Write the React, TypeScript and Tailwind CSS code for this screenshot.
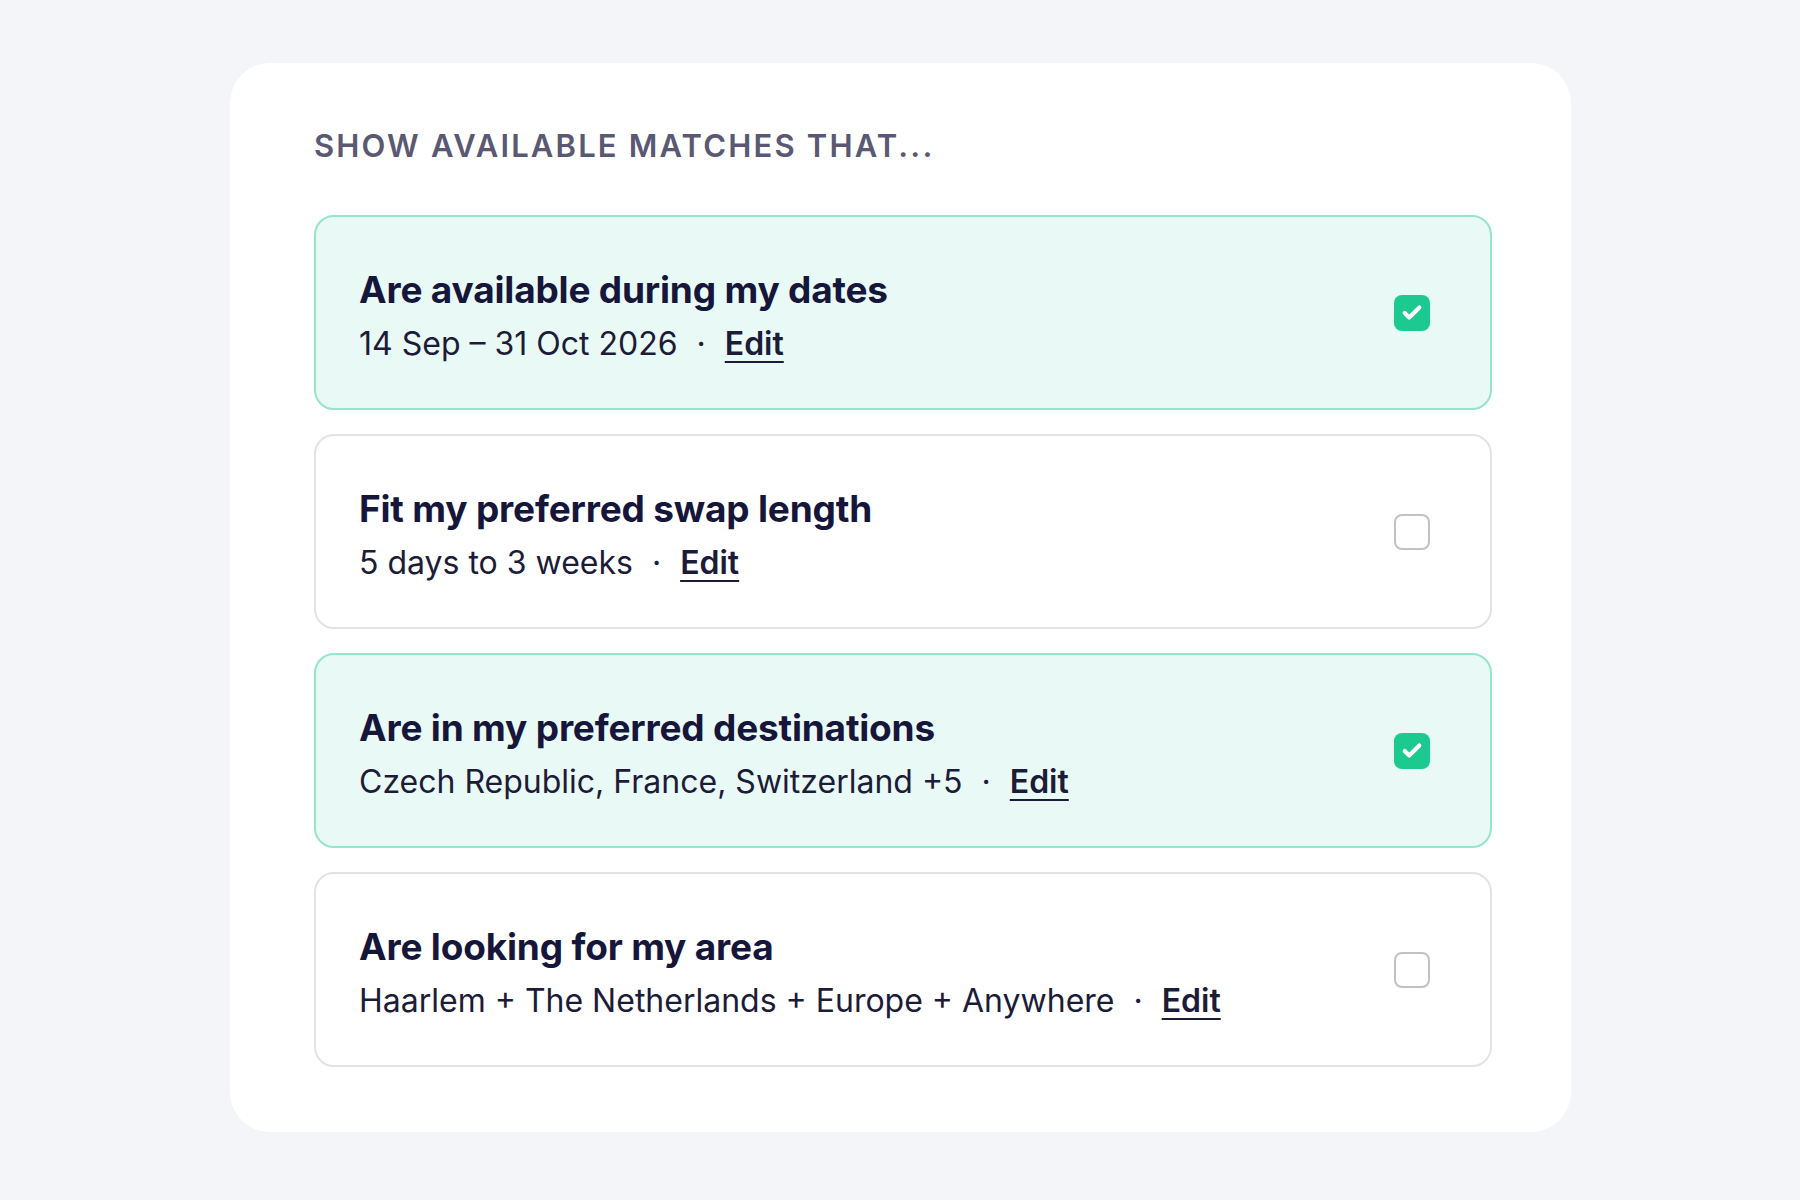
import { Check } from 'lucide-react';

interface Filter {
  title: string;
  detail: string;
  checked: boolean;
}

const filters: Filter[] = [
  { title: 'Are available during my dates', detail: '14 Sep – 31 Oct 2026', checked: true },
  { title: 'Fit my preferred swap length', detail: '5 days to 3 weeks', checked: false },
  {
    title: 'Are in my preferred destinations',
    detail: 'Czech Republic, France, Switzerland +5',
    checked: true,
  },
  {
    title: 'Are looking for my area',
    detail: 'Haarlem + The Netherlands + Europe + Anywhere',
    checked: false,
  },
];

function FilterRow({ filter }: { filter: Filter }) {
  return (
    <div
      className={`flex items-center justify-between h-[195px] rounded-[20px] border-2 pl-[43px] pr-[60px] ${
        filter.checked ? 'bg-[#e9f9f5] border-[#94e5cb]' : 'bg-white border-[#e3e3e6]'
      }`}
    >
      <div className="flex flex-col pt-[7px]">
        <h2 className="text-[37px] leading-[44px] font-bold text-[#16163a] tracking-[-0.005em]">
          {filter.title}
        </h2>
        <p className="mt-[12px] text-[32px] leading-[40px] text-[#1c1b38]">
          {filter.detail}
          <span className="mx-[19px]">·</span>
          <a href="#" className="font-semibold underline underline-offset-[6px] decoration-2">
            Edit
          </a>
        </p>
      </div>
      {filter.checked ? (
        <span className="flex items-center justify-center w-[36px] h-[36px] rounded-[8px] bg-[#1cc98f]">
          <Check className="w-[22px] h-[22px] text-white" strokeWidth={4.5} />
        </span>
      ) : (
        <span className="w-[36px] h-[36px] rounded-[8px] border-2 border-[#c2c2c6] bg-white" />
      )}
    </div>
  );
}

export default function App() {
  return (
    <div
      className="min-h-screen bg-[#f4f5f9] pt-[63px] pl-[230px]"
      style={{ fontFamily: 'Inter, "Noto Sans", sans-serif' }}
    >
      <section className="w-[1341px] h-[1069px] bg-white rounded-[40px] pt-[61px] px-[84px]">
        <h1 className="text-[31px] leading-[44px] font-semibold tracking-[0.07em] text-[#5a5872] uppercase">
          Show available matches that...
        </h1>
        <div className="mt-[47px] flex flex-col gap-[24px] w-[1178px]">
          {filters.map((f) => (
            <FilterRow key={f.title} filter={f} />
          ))}
        </div>
      </section>
    </div>
  );
}
